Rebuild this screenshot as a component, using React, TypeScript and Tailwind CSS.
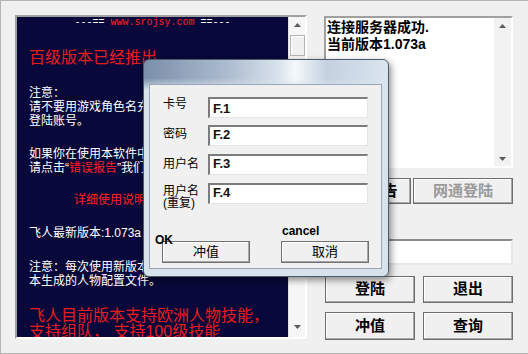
import React from 'react';

const cjk = "font-['Liberation_Sans','Noto_Sans_CJK_SC',sans-serif]";

function Arrow({ up }: { up?: boolean }) {
  return (
    <svg width="7" height="4" viewBox="0 0 7 4">
      <polygon points={up ? '0,4 3.5,0 7,4' : '0,0 3.5,4 7,0'} fill="#5a5a5a" />
    </svg>
  );
}

function Btn({ children, className = '', disabled }: { children: React.ReactNode; className?: string; disabled?: boolean }) {
  return (
    <div
      className={`flex items-center justify-center border border-[#6e6e6e] bg-[#f0f0f0] shadow-[inset_-1px_-1px_0_#a8a8a8,inset_1px_1px_0_#ffffff] text-[15px] font-bold ${disabled ? 'text-[#9a9a9a]' : 'text-black'} ${cjk} ${className}`}
    >
      {children}
    </div>
  );
}

function Field({ value, className = '' }: { value: string; className?: string }) {
  return (
    <div
      className={`w-[160px] h-[21px] bg-white border-t-2 border-l-2 border-t-[#7c7c7c] border-l-[#7c7c7c] border-r border-b border-r-[#e4e4e4] border-b-[#e4e4e4] pl-[3px] text-[13px] leading-[14px] font-bold text-[#111] font-['Liberation_Sans',sans-serif] ${className}`}
    >
      {value}
    </div>
  );
}

export default function App() {
  return (
    <div className="relative w-[528px] h-[354px] overflow-hidden bg-[#f0f0f0] border-t border-l border-b border-[#b4b4b4]">
      <div className="flex pt-[14px] pl-[14px]">
        {/* left info panel */}
        <div className="flex w-[292px] h-[324px] border-2 border-t-[#a0a0a0] border-l-[#a0a0a0] border-r-white border-b-white">
          <div className={`flex-1 overflow-hidden bg-[#08083a] pl-[12px] whitespace-nowrap text-[12px] leading-[14px] text-white ${cjk}`}>
            <div className="text-center pr-[12px] text-[10px] leading-[12px] font-['Liberation_Mono',monospace]">
              ---== <span className="text-[#ff2020]">www.srojsy.com</span> ==---
            </div>
            <div className="mt-[20px] text-[16px] leading-[18px] text-[#e81c1c]">百级版本已经推出</div>
            <div className="mt-[19px]">注意：</div>
            <div>请不要用游戏角色名充当游戏账号</div>
            <div>登陆账号。</div>
            <div className="mt-[19px]">如果你在使用本软件中遇到问题，</div>
            <div>
              请点击“<span className="text-[#ff2020]">错误报告</span>”我们会尽快解决。
            </div>
            <div className="mt-[18px] pl-[45px] text-[#ff2020]">详细使用说明</div>
            <div className="mt-[19px]">飞人最新版本:1.073a</div>
            <div className="mt-[20px]">注意：每次使用新版本前请删除旧版</div>
            <div>本生成的人物配置文件。</div>
            <div className="mt-[20px] text-[16px] leading-[16px] text-[#e81c1c]">飞人目前版本支持欧洲人物技能，</div>
            <div className="text-[16px] leading-[16px] text-[#e81c1c]">支持组队，&nbsp;支持100级技能</div>
          </div>
          <div className="flex w-[17px] flex-col items-center bg-[#f6f6f6] border-l border-[#e2e2e2]">
            <div className="mt-[6px]">
              <Arrow up />
            </div>
            <div className="mt-[8px] w-[15px] h-[21px] border border-[#b4b4b4] bg-[#f0f0f0] shadow-[inset_1px_1px_0_#ffffff]" />
            <div className="mt-auto mb-[8px]">
              <Arrow />
            </div>
          </div>
        </div>

        {/* right column */}
        <div className="ml-[17px] flex w-[189px] flex-col">
          <div className="flex h-[152px] mt-[1px] border-2 border-t-[#a0a0a0] border-l-[#a0a0a0] border-r-white border-b-white">
            <div className={`flex-1 bg-white pl-[1px] pt-[1px] text-[14px] leading-[17px] font-bold text-black ${cjk}`}>
              <div>连接服务器成功.</div>
              <div>当前版本1.073a</div>
            </div>
            <div className="flex w-[17px] flex-col items-center bg-[#f2f2f2]">
              <div className="mt-[6px]">
                <Arrow up />
              </div>
              <div className="mt-auto mb-[5px]">
                <Arrow />
              </div>
            </div>
          </div>
          <div className="mt-[10px] flex gap-[2px]">
            <Btn className="w-[87px] h-[26px]">错误报告</Btn>
            <Btn className="w-[100px] h-[26px]" disabled>
              网通登陆
            </Btn>
          </div>
          <div className="mt-[35px] h-[26px] bg-white border-2 border-t-[#8c8c8c] border-l-[#8c8c8c] border-r-[#e8e8e8] border-b-[#e8e8e8]" />
          <div className="mt-[11px] ml-[1px] flex gap-[8px]">
            <Btn className="w-[90px] h-[27px]">登陆</Btn>
            <Btn className="w-[90px] h-[27px]">退出</Btn>
          </div>
          <div className="mt-[9px] ml-[1px] flex gap-[8px]">
            <Btn className="w-[90px] h-[28px]">冲值</Btn>
            <Btn className="w-[90px] h-[28px]">查询</Btn>
          </div>
        </div>
      </div>

      {/* recharge dialog */}
      <div className="absolute left-[142px] top-[58px] flex w-[246px] h-[218px] flex-col rounded-[6px] border border-[#4d5869] bg-[linear-gradient(180deg,rgba(215,226,236,0)_0px,rgba(215,226,236,0)_18px,#d7e2ec_30px),linear-gradient(90deg,#7a8ea8_0%,#aebdd0_35%,#d8e2ec_55%,#f6f9fb_62%,#c3d1e0_75%,#dae5ef_100%)] pt-[24px] pl-[5px] pr-[6px] pb-[7px] shadow-[2px_3px_7px_rgba(0,0,0,0.45)]">
        <div className={`relative flex-1 border border-[#9ba7b5] bg-[#f0f0f0] pt-[12px] text-[12px] leading-[14px] text-black ${cjk}`}>
          <div className="flex items-start pl-[13px]">
            <div className="w-[45px]">卡号</div>
            <Field value="F.1" className="pt-[3px]" />
          </div>
          <div className="mt-[7px] flex items-start pl-[13px]">
            <div className="w-[45px] pt-[2px]">密码</div>
            <Field value="F.2" className="pt-[1px]" />
          </div>
          <div className="mt-[8px] flex items-start pl-[13px]">
            <div className="w-[45px] pt-[3px]">用户名</div>
            <Field value="F.3" className="pt-[1px]" />
          </div>
          <div className="mt-[8px] flex items-start pl-[13px]">
            <div className="w-[45px] pt-[2px] leading-[12px]">
              <div>用户名</div>
              <div>(重复)</div>
            </div>
            <Field value="F.4" className="pt-[1px]" />
          </div>
          <div className="mt-[32px] flex gap-[31px] pl-[12px]">
            <div className="flex w-[88px] h-[22px] items-center justify-center border border-[#707070] bg-[#f0f0f0] shadow-[inset_-1px_-1px_0_#a8a8a8,inset_1px_1px_0_#ffffff] text-[13px]">
              冲值
            </div>
            <div className="flex w-[88px] h-[22px] items-center justify-center border border-[#707070] bg-[#f0f0f0] shadow-[inset_-1px_-1px_0_#a8a8a8,inset_1px_1px_0_#ffffff] text-[13px]">
              取消
            </div>
          </div>
          <div className="absolute left-[5px] top-[148px] text-[12px] font-bold font-['Liberation_Sans',sans-serif]">OK</div>
          <div className="absolute left-[132px] top-[139px] text-[12px] font-bold font-['Liberation_Sans',sans-serif]">cancel</div>
        </div>
      </div>
    </div>
  );
}
